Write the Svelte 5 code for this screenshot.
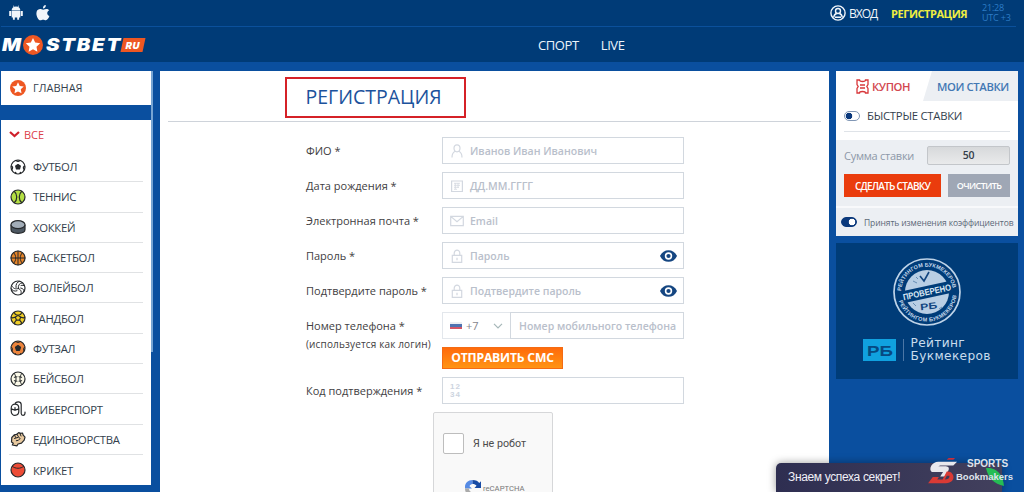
<script>
  const sports = [
    ['football', 'ФУТБОЛ'], ['tennis', 'ТЕННИС'], ['hockey', 'ХОККЕЙ'], ['basketball', 'БАСКЕТБОЛ'],
    ['volleyball', 'ВОЛЕЙБОЛ'], ['handball', 'ГАНДБОЛ'], ['futsal', 'ФУТЗАЛ'], ['baseball', 'БЕЙСБОЛ'],
    ['esport', 'КИБЕРСПОРТ'], ['fight', 'ЕДИНОБОРСТВА'], ['cricket', 'КРИКЕТ']
  ];
  const fields = [
    ['ФИО *', 'user', 'Иванов Иван Иванович', false],
    ['Дата рождения *', 'date', 'ДД.ММ.ГГГГ', false],
    ['Электронная почта *', 'mail', 'Email', false],
    ['Пароль *', 'lock', 'Пароль', true],
    ['Подтвердите пароль *', 'lock', 'Подтвердите пароль', true]
  ];
</script>

{#snippet ball(kind)}
  <svg class="ball" viewBox="0 0 16 16" fill="none" stroke="#26292c" stroke-width="1.2" stroke-linecap="round" stroke-linejoin="round">
    {#if kind === 'football'}
      <circle cx="8" cy="8" r="7" fill="#fff" /><path d="M8 5.500 10.300 7.100 9.500 10H6.500L5.700 7.100Z" fill="#26292c" />
      <path d="M6 1.700 8 2.400l2-.7M1.500 7l1 1.300-.2 1.700M14.500 7l-1 1.300.2 1.700M6 14.300l-.4-.8M10 14.300l.4-.8" stroke-width="1.400" />
    {:else if kind === 'tennis'}
      <circle cx="8" cy="8" r="7" fill="#b4df43" /><path d="M4.200 2.200C7.600 5 7.600 11 4.200 13.800M11.800 2.200C8.400 5 8.400 11 11.800 13.800" />
    {:else if kind === 'hockey'}
      <path d="M1 6v4.600c0 5 14 5 14 0V6" fill="#4d5862" /><ellipse cx="8" cy="5.700" rx="7" ry="4" fill="#a2adb8" />
    {:else if kind === 'basketball'}
      <circle cx="8" cy="8" r="7" fill="#e78528" /><path d="M8 1v14M1 8h14M3.700 2.600C6.500 6 6.500 10 3.700 13.400M12.300 2.600C9.500 6 9.500 10 12.300 13.400" stroke-width="1" />
    {:else if kind === 'volleyball'}
      <circle cx="8" cy="8" r="7" fill="#fff" /><path d="M8.300 8.500C8 5 9.500 3 12.500 2.800M6 7.500C5.500 4.500 7 2 9.500 1.200M8.300 8.500C5.500 9.500 3 8.500 1.600 5.500M7 10.800C4.500 11.700 2.300 10.700 1.200 8.700M8.300 8.500c2.800 1 3.600 3.200 2.400 6M10.700 8c2.500.5 3.700 2 3.300 3.800M11 5.500c1.500-.6 2.700-.3 3.800.8" stroke-width="1" />
    {:else if kind === 'handball'}
      <circle cx="8" cy="8" r="7" fill="#f1cf27" /><path d="m8 5.300 2.600 1.800-1 3H6.400l-1-3ZM4.200 2.300l1.200 2.200L8 5.300l2.600-.8 1.200-2.200M5.400 7.100 2.300 8 1.200 7M10.600 7.100l3.100.9 1.100-1M6.400 10.100l-1.800 2.200.2 1.700M9.600 10.100l1.800 2.200-.2 1.700" />
    {:else if kind === 'futsal'}
      <circle cx="8" cy="8" r="7" fill="#ec843c" /><path d="m8 5.500 2.500 1.800-1 3h-3l-1-3Z" fill="#26292c" /><path d="M5.700 1.700 8 2.500l2.300-.8M1.300 7l1.200 1.500-.3 2M14.700 7l-1.200 1.500.3 2M6 14.500l-.6-1M10 14.500l.6-1" stroke-width="1" />
    {:else if kind === 'baseball'}
      <circle cx="8" cy="8" r="7" fill="#fbf9e8" /><path d="M4 2.300C6.800 5 6.800 11 4 13.700M12 2.300C9.200 5 9.200 11 12 13.700M4.300 6.300l2.700-.5M4.300 9.700l2.700.5M11.700 6.300 9 5.800M11.700 9.700l-2.700.5" stroke-width="1" />
    {:else if kind === 'esport'}
      <path d="M1.200 7.200C1.200 1.800 8.800 1.800 8.800 7.200v3.100c0 5.400-7.600 5.400-7.600 0ZM1.300 7.800c2.200 1.400 5.200 1.400 7.400 0M5 6.500v3M5 3C5.500.4 11-.2 11.200 3.500v9c.2 2.700 3.800 2.500 3.800-.2V11" />
    {:else if kind === 'fight'}
      <path d="m1.500 11 .3-4.500 2.500-2.700 2.400-.5 2-1.700 2 .8L12.500 2l.7 2.200 1.800 2-.8 3-2.700 3-3.500.8L7 14.800 2.300 14l1-1.800Z" fill="#e8c99f" /><path d="m4.500 4.200 1.200 2.300M7 3.300l1.300 2.200M10 2.700l1 2.300M4.500 7.500l4-1.300 1.700 1.300-1.900 1.900-2 .3" stroke-width="1" />
    {:else}
      <circle cx="8" cy="8" r="7" fill="#ed4c36" /><path d="M2.300 4.300c3 2.700 8.400 2.700 11.400 0" stroke-width="1" />
    {/if}
  </svg>
{/snippet}

{#snippet star()}
  <svg class="star" viewBox="0 0 20 20"><circle cx="10" cy="10" r="10" fill="#ee5722" /><path fill="#fff" d="m10 2.900 2.200 4.600 5 .7-3.700 3.500.9 5-4.400-2.400-4.400 2.400.9-5-3.700-3.500 5-.7Z" /></svg>
{/snippet}

{#snippet fieldIcon(kind)}
  <svg class="ficon" viewBox="0 0 14 14" fill="none" stroke="#d3d8e0" stroke-width="1.200">
    {#if kind === 'user'}
      <path d="M7 .8c4.200 0 3.800 7 0 7s-4.200-7 0-7ZM2 13.500c0-3.600 1-5.300 3.300-6.200M12 13.500c0-3.600-1-5.300-3.300-6.200" />
    {:else if kind === 'date'}
      <path d="M1.600 2h10.800v10.500H1.600Z" /><path d="M4 4.300h6M4 6.300h6M4 8.300h5M4 10.300h3M5.300 4v6M8 4v5" stroke-width=".8" />
    {:else if kind === 'mail'}
      <path d="M.7 2.300h12.600v9.400H.7ZM1 2.600l6 5.200 6-5.200" />
    {:else}
      <path d="M2.300 6.300h9.400v7H2.300ZM4.200 6V4.300c0-4.300 5.600-4.300 5.600 0V6M7 8.800v2.400" />
    {/if}
  </svg>
{/snippet}

<div class="page">
  <header>
    <div class="top">
      <div class="stores">
        <svg viewBox="0 0 14 16" width="14" height="16" fill="#f0f5fb"><path d="M2.700 5.700h8.600v6.800h-1.200v2.300H8.200v-2.300H5.800v2.300H3.900v-2.300H2.700ZM.2 6h2v5h-2ZM11.800 6h2v5h-2ZM2.700 5.300C2.800 3.500 3.600 2.500 4.700 2L4 .8l.5-.3.8 1.300a5 5 0 0 1 3.400 0L9.500.5l.5.3L9.300 2c1.100.5 1.900 1.500 2 3.300Z" /></svg>
        <svg viewBox="0 0 14 16" width="14" height="16" fill="#f0f5fb"><path d="M9.800 0C8 .2 6.800 1.600 7 3.600 8.700 3.600 10 2 9.800 0ZM7.200 4.800C6 4.500 5.200 4 4 4 1.600 4.100.4 6 .4 8.500c0 3 2 6.800 4 6.800 1 0 1.500-.6 2.700-.6s1.700.6 2.700.6c1.600 0 3-2.300 3.600-4.200-3-1.300-2.600-4.600-.2-5.800C11.700 3.400 9.300 4 7.200 4.800Z" /></svg>
      </div>
      <div class="account">
        <svg width="16" height="16" viewBox="0 0 16 16" fill="none" stroke="#f2f6fb" stroke-width="1.400"><circle cx="8" cy="8" r="7.100" /><circle cx="8" cy="6" r="2.500" /><path d="M3.700 12.500c.2-2.200 1.200-3.500 3-4M12.300 12.500c-.2-2.200-1.200-3.500-3-4M5 12.300h6" /></svg>
        <span class="login">ВХОД</span><span class="signup">РЕГИСТРАЦИЯ</span>
        <span class="clock"><span>21:28</span><span>UTC +3</span></span>
      </div>
    </div>
    <div class="nav">
      <div class="logo">
        <svg class="word" width="20" height="16" viewBox="0 0 20 16"><text x="0" y="14" textLength="19" lengthAdjust="spacingAndGlyphs">M</text></svg>
        {@render star()}
        <svg class="word" width="76" height="16" viewBox="0 0 76 16"><text class="spaced" x="1" y="14" textLength="76" lengthAdjust="spacingAndGlyphs">STBET</text></svg>
        <span class="ru"><i>RU</i></span>
      </div>
      <nav><span>СПОРТ</span><span>LIVE</span></nav>
    </div>
  </header>

  <div class="columns">
    <aside class="left">
      <div class="home">{@render star()}<span>ГЛАВНАЯ</span></div>
      <div class="sports">
        <div class="all"><svg width="11" height="7" viewBox="0 0 11 7"><path d="m1 1 4.500 4L10 1" fill="none" stroke="#cf202b" stroke-width="2.200" /></svg><span>ВСЕ</span></div>
        {#each sports as [kind, name]}
          <div class="sport">{@render ball(kind)}<span>{name}</span></div>
        {/each}
      </div>
    </aside>

    <main>
      <div class="heading"><h1>РЕГИСТРАЦИЯ</h1></div>
      <form>
        {#each fields as [label, icon, hint, eye]}
          <div class="row">
            <span class="label">{label}</span>
            <div class="field">
              {@render fieldIcon(icon)}<span>{hint}</span>
              {#if eye}
                <svg class="eye" viewBox="0 0 17 12"><path d="M0 6C3.300-1.800 13.700-1.800 17 6 13.700 13.800 3.300 13.800 0 6Z" fill="#154681" /><circle cx="8.500" cy="6" r="3.700" fill="#fff" /><circle cx="8.500" cy="6" r="2.100" fill="#154681" /></svg>
              {/if}
            </div>
          </div>
        {/each}
        <div class="row phone">
          <span class="label">Номер телефона *<small>(используется как логин)</small></span>
          <div class="code"><i class="flag"></i><span>+7</span><svg width="10" height="6" viewBox="0 0 10 6"><path d="m1 .8 4 4 4-4" fill="none" stroke="#a6b7b8" stroke-width="1.200" /></svg></div>
          <div class="field number"><span>Номер мобильного телефона</span></div>
        </div>
        <button type="button">ОТПРАВИТЬ СМС</button>
        <div class="row">
          <span class="label">Код подтверждения *</span>
          <div class="field"><span class="digits"><span>12</span><span>34</span></span></div>
        </div>
      </form>
      <div class="captcha">
        <div class="check"><i></i><span>Я не робот</span></div>
        <div class="brand">
          <svg width="18" height="18" viewBox="0 0 18 18"><path d="M1 8C1 4 4 1 8.500 1v4C7 5 6 6 5.500 7.200L8 9.500H1Z" fill="#568be5" /><path d="M8.500 1C12 1 14 2.300 15.200 4L17 2.300V9h-6.500l2-2.200C11.700 5.600 10.500 5 8.500 5Z" fill="#174ba5" /><path d="M1 9.500h4c0 3 2.500 4 4.500 4V18C4 18 1 14 1 9.500Z" fill="#aaa" /></svg>
          <span>reCAPTCHA</span>
        </div>
      </div>
    </main>

    <aside class="right">
      <div class="coupon">
        <div class="tabs">
          <div class="tab active"><svg width="13" height="15" viewBox="0 0 13 15" fill="none" stroke="#d8373a" stroke-width="1.300"><path d="M1 1h2.500c0 2 6 2 6 0H12v4.500L10.800 7.500 12 9.500V14H9.500c0-2-6-2-6 0H1V9.500l1.200-2L1 5.500ZM4 6h5M4 9h5" /></svg><span>КУПОН</span></div>
          <div class="tab mine"><span>МОИ СТАВКИ</span></div>
        </div>
        <div class="quick"><div><i class="switch"></i><span>БЫСТРЫЕ СТАВКИ</span></div></div>
        <div class="bet">
          <div class="sum"><span>Сумма ставки</span><div class="amount">50</div></div>
          <div class="actions"><div class="place"><span>СДЕЛАТЬ СТАВКУ</span></div><div class="clear"><span>ОЧИСТИТЬ</span></div></div>
        </div>
        <div class="accept"><i class="switch on"></i><span>Принять изменения коэффициентов</span></div>
      </div>
      <div class="promo">
        <svg class="stamp" viewBox="0 0 70 70">
          <defs><path id="arcTop" d="M9.100 35A25.900 25.900 0 0 1 60.500 31" /><path id="arcBottom" d="M6.500 43A29.600 29.600 0 0 0 64.600 35" /></defs>
          <circle cx="35" cy="35" r="33" fill="none" stroke="#bed3e8" stroke-width="1.700" />
          <circle cx="35" cy="35" r="22" fill="#b8cee4" />
          <g fill="#c3d7ea" font-family="Liberation Sans" font-weight="700" font-size="5.500">
            <text><textPath href="#arcTop" startOffset="1" textLength="75">РЕЙТИНГОМ БУКМЕКЕРОВ</textPath></text>
            <text><textPath href="#arcBottom" startOffset="1" textLength="80">РЕЙТИНГОМ БУКМЕКЕРОВ</textPath></text>
          </g>
          <path d="m28 19 4 5 5-9" fill="none" stroke="#114580" stroke-width="1.600" />
          <g transform="rotate(-12 35 35)">
            <rect x="12" y="29" width="46" height="12" fill="#003c78" />
            <text x="10.500" y="38.200" textLength="49" lengthAdjust="spacingAndGlyphs" fill="#d9e7f4" font-family="Liberation Sans" font-weight="700" font-size="8.800">ПРОВЕРЕНО</text>
          </g>
          <text x="28" y="52.500" transform="rotate(-6 35 48)" fill="#114580" font-family="Liberation Sans" font-weight="700" font-size="9" textLength="17" lengthAdjust="spacingAndGlyphs">РБ</text>
          <path d="m21 24 4 2M24 20l2 2M21 46l3 3M47 52l3-2" stroke="#668db3" />
        </svg>
        <div class="rating">
          <svg class="rb" width="33" height="22" viewBox="0 0 33 22"><rect width="33" height="22" fill="#10a1df" /><text x="4" y="16.500" textLength="26" lengthAdjust="spacingAndGlyphs" font-family="Liberation Sans" font-weight="700" font-size="15.500" fill="#064982">РБ</text></svg>
          <i></i><p><span>Рейтинг</span><span>Букмекеров</span></p>
        </div>
      </div>
    </aside>
  </div>

  <div class="toast">Знаем успеха секрет!</div>
  <div class="watermark">
    <svg class="leaf" width="22" height="20" viewBox="0 0 22 20"><path d="M1 1c10-1 17 6 18 18C9 17 3 11 1 1Z" fill="#25bd54" /></svg>
    <svg class="mark" viewBox="0 0 33 30"><path d="M31 5H11C4 5 0 13 4 16h12l-3 5h5l4-7c1-3-1-4-4-4h-7l2-1h14Z" fill="#e8e8ed" /><path d="M5 21.500 0 28h19c6 0 9-4 8-8-1-3.500-4-5-7-4.500L15.500 24H9.800l1.700-2.500ZM20 20h3c0 3-2 4-5 4Z" fill="#d93a35" fill-rule="evenodd" /><path d="m20 3 2-2h7l-2 2" fill="#c92e3a" /></svg>
    <p><span>SPORTS</span><span>Bookmakers</span></p>
  </div>
</div>

<style>
  :global(body) { margin: 0; }
  * { box-sizing: border-box; }
  .page { position: relative; width: 1024px; height: 492px; overflow: hidden; background: #0a4f9f; font-family: "Open Sans", "Noto Sans", sans-serif; color: #343f4d; white-space: nowrap; }
  svg { display: block; flex: none; }
  header { height: 62px; background: #003b77; }
  .top { height: 27px; margin: 0 8px 0 1px; border-bottom: 1px solid #0b509b; display: flex; justify-content: space-between; }
  .stores { display: flex; gap: 13px; padding: 5px 0 0 8px; }
  .account { display: flex; align-items: center; color: #f2f6fb; width: 186px; }
  .login { font-size: 12px; letter-spacing: -1px; margin-left: 3px; width: 42px; }
  .signup { font-size: 11px; font-weight: 700; color: #efed41; width: 91px; letter-spacing: -.45px; }
  .clock { display: flex; flex-direction: column; font-size: 9px; line-height: 10px; letter-spacing: -.2px; color: #2d7bc6; }
  .nav { height: 35px; display: flex; align-items: center; }
  .logo { width: 538px; padding-left: 2px; display: flex; align-items: center; color: #fff; }
  .word { overflow: visible; font: italic 900 17.500px Inter, sans-serif; fill: #fff; }
  .spaced { letter-spacing: 1.500px; }
  .logo .star { width: 20px; height: 20px; margin: 0 2px 0 1px; }
  .ru { width: 22px; height: 14px; margin-left: 1px; background: #ee5722; transform: skewX(-12deg); display: grid; place-items: center; }
  .ru i { font: 900 9.500px Inter, sans-serif; letter-spacing: .5px; }
  nav { display: flex; gap: 22px; color: #edf4fc; font-size: 13px; letter-spacing: -.4px; }
  .columns { height: 430px; padding-top: 9px; display: flex; }
  .left { width: 152px; margin: 0 7px 0 1px; flex: none; border-right: 2px solid #76a4d3; height: 281px; }
  .home { height: 34px; background: #fff; display: flex; align-items: center; padding: 0 0 1px 9px; gap: 7px; font-size: 11px; }
  .home .star { width: 16px; height: 16px; }
  .sports { margin-top: 15px; height: 365px; background: #fff; overflow: hidden; }
  .all { height: 32px; display: flex; align-items: center; padding: 0 0 3px 8px; gap: 4px; color: #dc4048; font-size: 11px; }
  .sport { height: 30.300px; margin: 0 8px; border-bottom: 1px solid #e0e2e4; display: flex; align-items: center; gap: 7px; padding-left: 1px; font-size: 11.300px; letter-spacing: -.28px; }
  .sport:last-child { border: 0; }
  .ball { width: 16px; height: 16px; }
  main { width: 669px; margin-right: 7px; background: #fff; flex: none; height: 430px; }
  .heading { height: 51px; margin: 0 8px; border-bottom: 1px solid #ced3da; padding: 6px 0 0 117px; }
  h1 { width: 181px; height: 41px; margin: 0; border: 2px solid #d52127; padding-left: 18.500px; font-size: 19.500px; line-height: 35px; font-weight: 400; color: #1c529c; }
  form { padding: 15px 0 0 146px; display: flex; flex-direction: column; gap: 8px; color: #414042; }
  .row { display: flex; height: 27px; }
  .label { width: 136px; font-size: 11px; line-height: 27px; flex: none; font-weight: 500; }
  .label small { display: block; font-size: 10px; line-height: 11px; letter-spacing: .15px; }
  .field { width: 242px; height: 27px; border: 1px solid #d2d8df; display: flex; align-items: center; padding: 0 7px; font-size: 10.500px; font-weight: 600; color: #b9c0cb; }
  .ficon { width: 14px; height: 14px; margin-right: 6px; }
  .eye { width: 17px; height: 12px; margin-left: auto; margin-right: -1px; }
  .code { width: 68px; border: 1px solid #e3e7ec; border-right: 0; display: flex; align-items: center; padding-left: 7px; font-size: 11px; color: #85858c; }
  .code svg { margin-left: 14px; }
  .flag { width: 12px; height: 7px; margin-right: 4px; background: linear-gradient(#eceef3 33%, #4f72b0 33% 66%, #d25566 66%); }
  .number { width: 174px; padding-left: 8px; }
  button { width: 121px; height: 22px; margin-left: 136px; padding: 0; border: 1px solid #f46b13; background: linear-gradient(#ff6a0b, #ff9414); color: #fff; font: 700 12.200px "Open Sans", sans-serif; line-height: 20px; letter-spacing: -.2px; }
  .digits { display: flex; flex-direction: column; font: 700 8px/8px "Liberation Sans", sans-serif; letter-spacing: 1px; color: #cdd4e0; }
  .captcha { width: 120px; height: 100px; margin: 8px 0 0 273px; border: 1px solid #d6d7d9; border-radius: 2px; background: #f9f9f9; }
  .check { display: flex; align-items: center; padding: 20px 0 0 9px; gap: 9px; font: 10.700px Roboto, sans-serif; color: #4c4c4c; }
  .check i { width: 21px; height: 21px; border: 1px solid #bdbdbd; border-radius: 2px; background: #fff; }
  .brand { display: flex; align-items: center; margin: 25px 0 0 30px; gap: 1px; font: 7.700px Roboto, sans-serif; color: #777; }
  .right { width: 182px; flex: none; }
  .coupon { height: 165px; background: #eceff3; }
  .tabs { height: 30px; display: flex; background: #fff; font-weight: 600; font-size: 11.300px; letter-spacing: -.4px; }
  .tab { display: flex; align-items: center; }
  .active { width: 87px; padding-left: 20px; gap: 3px; color: #d24750; }
  .mine { width: 95px; padding-left: 14px; color: #4378b3; background: #eceff3; clip-path: polygon(9px 0, 100% 0, 100% 100%, 0 100%); }
  .quick { height: 39px; background: #fff; padding: 0 8px; font-size: 11.300px; letter-spacing: -.25px; }
  .quick > div { height: 31px; padding-top: 7px; display: flex; align-items: flex-start; gap: 7px; border-bottom: 1px solid #dfe3e8; }
  .switch { display: block; flex: none; width: 16px; height: 10px; margin-top: 3px; border: 1px solid #8197b5; border-radius: 5px; background: radial-gradient(circle at 4px 4px, #0b397c 3px, #fff 3.600px); }
  .switch.on { margin: 0; background: radial-gradient(circle at 10px 4px, #fff 3px, #0b397c 3.600px); border-color: #0b397c; }
  .bet { height: 66px; padding: 6px 8px 0; }
  .sum { display: flex; justify-content: space-between; align-items: center; font-size: 11px; letter-spacing: -.25px; color: #8c98a8; }
  .amount { width: 83px; height: 19px; border: 1px solid #c3c6ca; border-radius: 2px; background: linear-gradient(#d7d9db, #e9eaeb); color: #343d49; font-size: 10.500px; font-weight: 600; line-height: 17px; text-align: center; }
  .actions { display: flex; justify-content: space-between; margin-top: 9px; color: #fff; font-weight: 600; font-size: 10px; }
  .place, .clear { height: 23px; display: grid; place-items: center; }
  .place { width: 97px; background: #ea3c0d; letter-spacing: -.75px; }
  .clear { width: 62px; background: #9fa7b5; font-size: 9px; letter-spacing: -.6px; }
  .accept { height: 30px; border-top: 2px solid #f8f9fb; display: flex; align-items: center; gap: 7px; padding-left: 5px; font-size: 8.500px; letter-spacing: -.1px; color: #5c6978; }
  .promo { height: 136px; margin-top: 7px; background: #003c78; display: flex; flex-direction: column; align-items: center; padding-top: 14px; }
  .stamp { width: 70px; height: 70px; }
  .rating { width: 129px; display: flex; align-items: center; margin-top: 10px; }
  .rating i { width: 1px; height: 22px; background: #4b76a5; margin: 0 7px; }
  .rating p { margin: 0; display: flex; flex-direction: column; font: 12.200px/13px "DejaVu Sans", sans-serif; letter-spacing: .35px; color: #c9dced; }
  .toast { position: absolute; left: 776px; top: 463px; width: 226px; height: 29px; padding-left: 12px; border-radius: 5px 0 0; background: linear-gradient(90deg, #2e2e51, #42405d); box-shadow: 0 0 9px #0006; font: 12px/29px "Liberation Sans", sans-serif; letter-spacing: -.35px; color: #f0eff7; }
  .watermark { position: absolute; left: 928px; top: 457px; width: 90px; height: 30px; }
  .leaf { position: absolute; left: 57px; top: 10px; }
  .mark { position: absolute; left: 0; top: 0; width: 31px; height: 28px; }
  .watermark p { position: absolute; left: 28px; top: 0; margin: 0; display: flex; flex-direction: column; font: 700 9.500px/13px "Liberation Sans", sans-serif; color: #dfe3eb; }
  .watermark p span:first-child { padding-left: 11px; font-size: 10px; }
</style>
